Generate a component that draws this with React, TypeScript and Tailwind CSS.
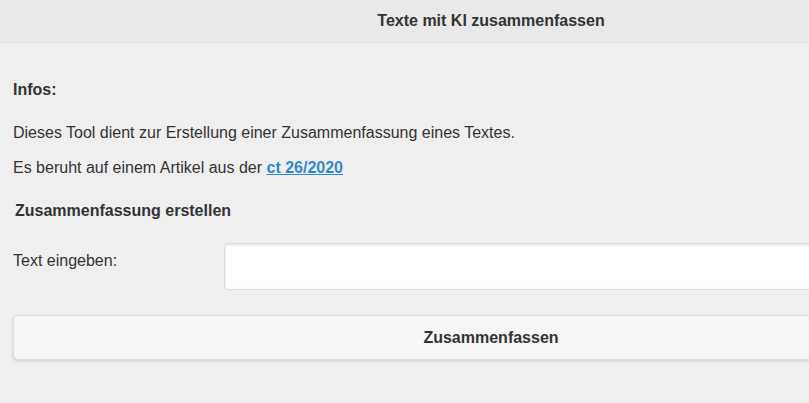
export default function App() {
  return (
    <div className="h-[403px] w-[809px] overflow-hidden bg-[#efefef] font-['Liberation_Sans',Arial,sans-serif] text-[16px] text-[#333]">
      <div className="w-[982px]">
        <header className="flex h-[43px] items-center justify-center border-b border-[#dddddd] bg-[#e9e9e9] pb-[1px]">
          <h1 className="text-[16px] font-bold leading-[18px] text-[#333]">
            Texte mit KI zusammenfassen
          </h1>
        </header>

        <main className="px-[13px]">
          <p className="mt-[38px] font-bold leading-[18px]">Infos:</p>
          <p className="mt-[25px] leading-[18px]">
            Dieses Tool dient zur Erstellung einer Zusammenfassung eines Textes.
          </p>
          <p className="mt-[17px] leading-[18px]">
            Es beruht auf einem Artikel aus der{" "}
            <a href="#" className="font-bold text-[#3388cc] underline">
              ct 26/2020
            </a>
          </p>

          <h2 className="mt-[25px] pl-[2px] font-bold leading-[18px]">
            Zusammenfassung erstellen
          </h2>

          <div className="mt-[23px] flex items-start">
            <label className="mt-[9px] w-[211px] shrink-0 leading-[18px]">
              Text eingeben:
            </label>
            <input
              type="text"
              className="h-[47px] flex-1 rounded-[4px] border border-[#dddddd] bg-white px-2 shadow-[inset_0_1px_3px_rgba(0,0,0,0.12)] outline-none"
            />
          </div>

          <button className="mt-[25px] flex h-[45px] w-full items-center justify-center rounded-[5px] border border-[#dddddd] bg-[#f6f6f6] text-[16px] font-bold leading-[18px] text-[#333] shadow-[0_1px_3px_rgba(0,0,0,0.15)]">
            Zusammenfassen
          </button>
        </main>
      </div>
    </div>
  );
}
